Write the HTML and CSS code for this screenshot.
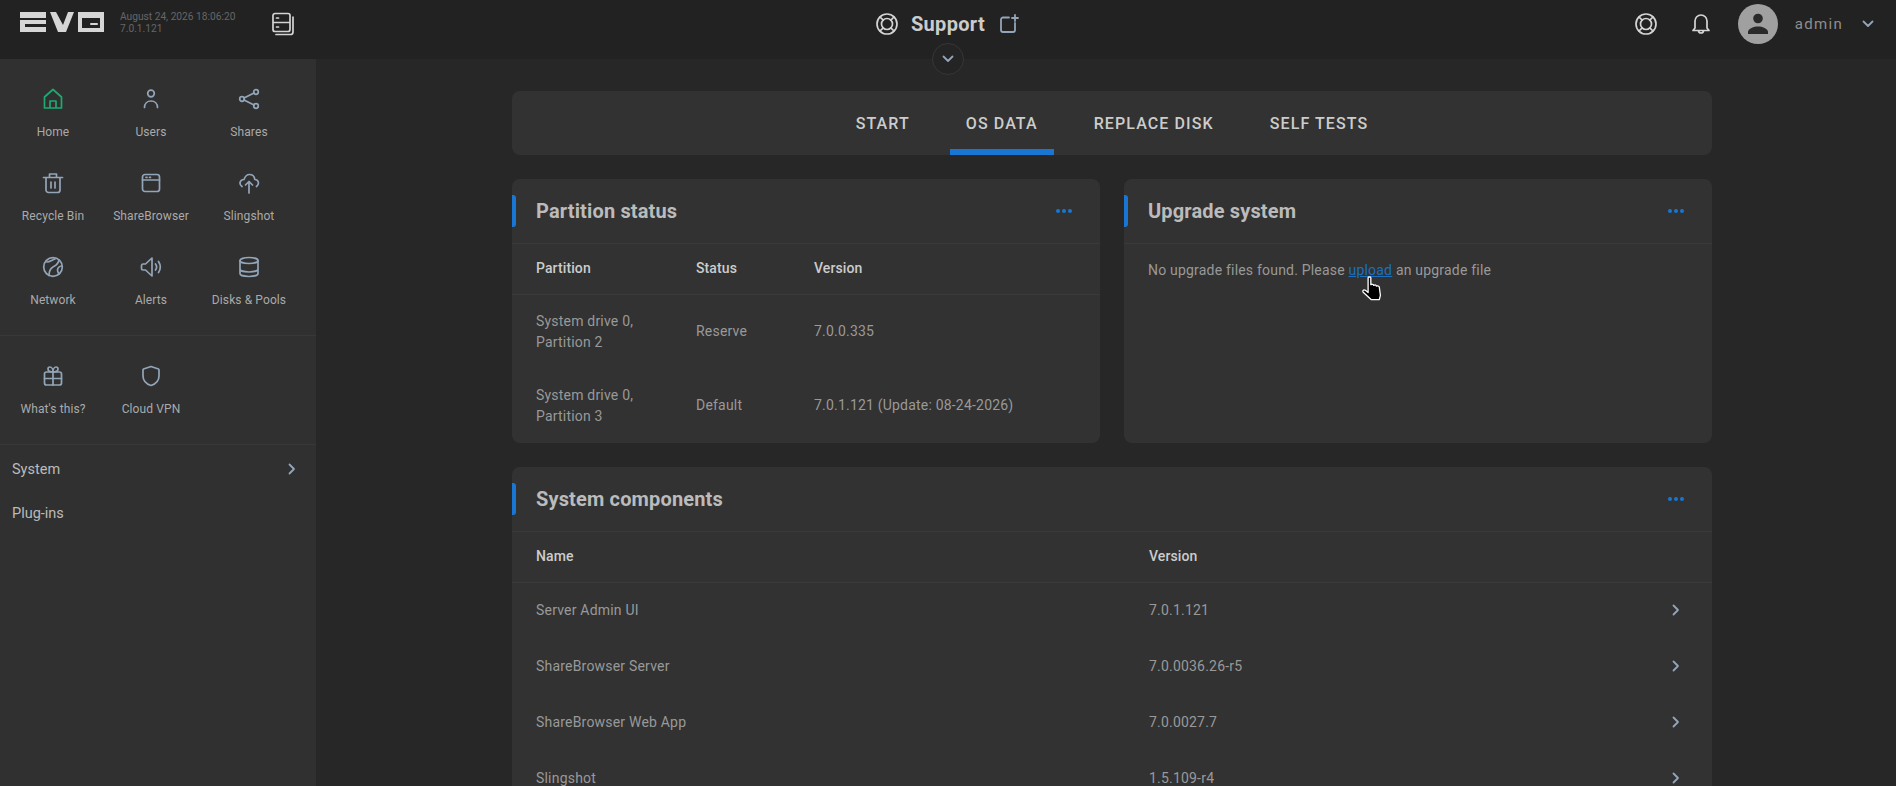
FILE: index.html
```html
<!DOCTYPE html>
<html lang="en">

<head>
    <meta charset="UTF-8">
    <title>Support</title>
    <link rel="stylesheet" href="styles.css">
</head>

<body>
    <header class="topbar">
        <div class="top-left">
            <svg class="logo" width="84" height="20" viewBox="0 0 84 20">
                <path fill="#d6d6d6" d="M0 0h26v6H0zM0 8h26v4H5v3h21v5H0z" />
                <path fill="#d6d6d6" d="M30 0h6l7 13 5-13h6l-8 20h-8z" />
                <path fill="#d6d6d6" fill-rule="evenodd" d="M58 0h26v20H58zM62 6v10h18V6z" />
                <rect fill="#d6d6d6" x="70" y="11" width="8" height="2" rx="1" />
            </svg>
            <div class="stamp">
                <div>August 24, 2026 18:06:20</div>
                <div>7.0.1.121</div>
            </div>
            <svg class="ico-light server" width="24" height="24" viewBox="0 0 24 24">
                <path d="M2 3.500a2 2 0 0 1 2-2h13a2 2 0 0 1 2 2v14a2 2 0 0 1-2 2H4a2 2 0 0 1-2-2zM2 10.500h17" />
                <path d="M22 5v15a2.500 2.500 0 0 1-2.500 2.500H5" />
                <path d="M5.500 6h2M5.500 15h2" />
            </svg>
        </div>
        <div class="top-mid">
            <svg class="ico-light" width="24" height="24" viewBox="0 0 24 24">
                <circle cx="12" cy="12" r="10" />
                <circle cx="12" cy="12" r="5.500" />
                <path d="M5 5l3.200 3.200M19 5l-3.200 3.200M5 19l3.200-3.200M19 19l-3.200-3.200" />
            </svg>
            <span class="page-name">Support</span>
            <svg class="ico-blue add-tab" width="20" height="20" viewBox="0 0 20 20">
                <path d="M10 3.500H4a2 2 0 0 0-2 2V16a2 2 0 0 0 2 2h10a2 2 0 0 0 2-2V9" />
                <path d="M16 1v6M13 4h6" />
            </svg>
        </div>
        <div class="top-right">
            <svg class="ico-light" width="24" height="24" viewBox="0 0 24 24">
                <circle cx="12" cy="12" r="10" />
                <circle cx="12" cy="12" r="5.500" />
                <path d="M5 5l3.200 3.200M19 5l-3.200 3.200M5 19l3.200-3.200M19 19l-3.200-3.200" />
            </svg>
            <svg class="ico-light bell" width="22" height="24" viewBox="0 0 22 24">
                <path d="M5 16V9a6 6 0 0 1 12 0v7l2 2.500H3zM8.500 18.500a2.500 2.500 0 0 0 5 0" />
            </svg>
            <div class="avatar">
                <svg width="40" height="40" viewBox="0 0 40 40">
                    <circle cx="20" cy="14.500" r="4.800" fill="#2a2a2a" />
                    <path fill="#2a2a2a" d="M10 30v-2c0-3.500 6-5.500 10-5.500s10 2 10 5.500v2z" />
                </svg>
            </div>
            <span class="user">admin</span>
            <svg class="ico-blue user-caret" width="12" height="8" viewBox="0 0 12 8">
                <path d="M1.500 1.500L6 6l4.500-4.500" />
            </svg>
        </div>
        <button class="collapse">
            <svg class="ico-blue" width="12" height="8" viewBox="0 0 12 8">
                <path d="M1.500 1.500L6 6l4.500-4.500" />
            </svg>
        </button>
    </header>

    <div class="page">
        <nav class="sidebar">
            <div class="nav-grid">
                <a class="nav-item active">
                    <svg width="24" height="24" viewBox="0 0 24 24">
                        <path d="M3.500 21V10L12 2.500 20.500 10v11zM9 21v-7h6v7" />
                    </svg>
                    <span>Home</span>
                </a>
                <a class="nav-item">
                    <svg width="24" height="24" viewBox="0 0 24 24">
                        <circle cx="12" cy="6.500" r="3.300" />
                        <path d="M5.500 20.500c0-4 2.800-6.500 6.500-6.500s6.500 2.500 6.500 6.500" />
                    </svg>
                    <span>Users</span>
                </a>
                <a class="nav-item">
                    <svg width="24" height="24" viewBox="0 0 24 24">
                        <circle cx="5" cy="12" r="2.300" />
                        <circle cx="19" cy="5" r="2.300" />
                        <circle cx="19" cy="19" r="2.300" />
                        <path d="M7 11l10-5M7 13l10 5" />
                    </svg>
                    <span>Shares</span>
                </a>
                <a class="nav-item">
                    <svg width="24" height="24" viewBox="0 0 24 24">
                        <path d="M2.500 6.500h19M8.500 6.500V3h7v3.500M5 6.500V19a2.500 2.500 0 0 0 2.500 2.500h9A2.500 2.500 0 0 0 19 19V6.500M10 11v6M14 11v6" />
                    </svg>
                    <span>Recycle Bin</span>
                </a>
                <a class="nav-item">
                    <svg width="24" height="24" viewBox="0 0 24 24">
                        <rect x="3.500" y="3.500" width="17" height="17" rx="2.500" />
                        <path d="M3.500 9h17M7 6.300h1M10.500 6.300h1" />
                    </svg>
                    <span>ShareBrowser</span>
                </a>
                <a class="nav-item">
                    <svg width="24" height="24" viewBox="0 0 24 24">
                        <path d="M5 15.500C1.500 13 3 8.500 7 8.500 8 5.500 10 3.500 12.500 3.500c3 0 5 2 5.300 5 3.700 0 5 4.500 1.700 7" />
                        <path d="M12 22v-11M8.500 14l3.500-3.500 3.500 3.500" />
                    </svg>
                    <span>Slingshot</span>
                </a>
                <a class="nav-item">
                    <svg width="24" height="24" viewBox="0 0 24 24">
                        <circle cx="12" cy="12" r="9.300" />
                        <path d="M18 5c-1 5-3.500 5.500-6 7s-4 3-4 8.500M14 4c-3 1-5.500 3-8 3" />
                        <path d="M20.500 11c-2 0-4 2-4 4s1 3 1.500 4" />
                    </svg>
                    <span>Network</span>
                </a>
                <a class="nav-item">
                    <svg width="24" height="24" viewBox="0 0 24 24">
                        <path d="M2.500 11v2.500c0 1 .7 1.500 1.500 1.500h2.500l6.500 6V3L6.500 9H4c-.8 0-1.500.6-1.500 2z" />
                        <path d="M16.500 9a5 5 0 0 1 0 6M19.500 6.500a10 10 0 0 1 0 11" />
                    </svg>
                    <span>Alerts</span>
                </a>
                <a class="nav-item">
                    <svg width="24" height="24" viewBox="0 0 24 24">
                        <ellipse cx="12" cy="5.500" rx="9" ry="3" />
                        <path d="M3 5.500v13c0 1.700 4 3 9 3s9-1.300 9-3v-13M3 14c0 1.700 4 3 9 3s9-1.300 9-3" />
                    </svg>
                    <span>Disks &amp; Pools</span>
                </a>
            </div>
            <div class="nav-grid second">
                <a class="nav-item">
                    <svg width="24" height="24" viewBox="0 0 24 24">
                        <rect x="3.500" y="8" width="17" height="13" rx="2" />
                        <path d="M3.500 14.500h17M12 8v13M12 8c-3 0-5-1-5-3a2 2 0 0 1 2-2c1.500 0 3 2 3 5zM12 8c3 0 5-1 5-3a2 2 0 0 0-2-2c-1.500 0-3 2-3 5z" />
                    </svg>
                    <span>What's this?</span>
                </a>
                <a class="nav-item">
                    <svg width="24" height="24" viewBox="0 0 24 24">
                        <path d="M12 2.500l7.500 2.500c.5 .2 .5 .5 .5 1v6c0 4.500-3.500 8-8 9.500C7.500 20 4 16.500 4 12V6c0-.5 0-.8 .5-1z" />
                    </svg>
                    <span>Cloud VPN</span>
                </a>
            </div>
            <div class="nav-list">
                <a class="nav-row">System
                    <svg class="ico-blue" width="8" height="12" viewBox="0 0 8 12">
                        <path d="M1.500 1.500L6 6l-4.500 4.500" />
                    </svg>
                </a>
                <a class="nav-row">Plug-ins</a>
            </div>
        </nav>

        <main class="content">
            <div class="wrap">
                <div class="tabs">
                    <a class="tab">START</a>
                    <a class="tab selected">OS DATA</a>
                    <a class="tab">REPLACE DISK</a>
                    <a class="tab">SELF TESTS</a>
                </div>

                <div class="two-col">
                    <section class="card">
                        <div class="card-head">
                            <h2>Partition status</h2>
                            <span class="dots"><i></i><i></i><i></i></span>
                        </div>
                        <table class="tbl partitions">
                            <thead>
                                <tr>
                                    <th>Partition</th>
                                    <th>Status</th>
                                    <th>Version</th>
                                </tr>
                            </thead>
                            <tbody>
                                <tr>
                                    <td>System drive 0, Partition 2</td>
                                    <td>Reserve</td>
                                    <td>7.0.0.335</td>
                                </tr>
                                <tr>
                                    <td>System drive 0, Partition 3</td>
                                    <td>Default</td>
                                    <td>7.0.1.121 (Update: 08-24-2026)</td>
                                </tr>
                            </tbody>
                        </table>
                    </section>

                    <section class="card">
                        <div class="card-head">
                            <h2>Upgrade system</h2>
                            <span class="dots"><i></i><i></i><i></i></span>
                        </div>
                        <p class="note">No upgrade files found. Please <a class="link">upload</a> an upgrade file</p>
                    </section>
                </div>

                <section class="card">
                    <div class="card-head">
                        <h2>System components</h2>
                        <span class="dots"><i></i><i></i><i></i></span>
                    </div>
                    <table class="tbl components">
                        <thead>
                            <tr>
                                <th>Name</th>
                                <th>Version</th>
                                <th></th>
                            </tr>
                        </thead>
                        <tbody>
                            <tr>
                                <td>Server Admin UI</td>
                                <td>7.0.1.121</td>
                                <td class="arrow"><svg class="ico-blue" width="8" height="12" viewBox="0 0 8 12"><path d="M1.500 1.500L6 6l-4.500 4.500" /></svg></td>
                            </tr>
                            <tr>
                                <td>ShareBrowser Server</td>
                                <td>7.0.0036.26-r5</td>
                                <td class="arrow"><svg class="ico-blue" width="8" height="12" viewBox="0 0 8 12"><path d="M1.500 1.500L6 6l-4.500 4.500" /></svg></td>
                            </tr>
                            <tr>
                                <td>ShareBrowser Web App</td>
                                <td>7.0.0027.7</td>
                                <td class="arrow"><svg class="ico-blue" width="8" height="12" viewBox="0 0 8 12"><path d="M1.500 1.500L6 6l-4.500 4.500" /></svg></td>
                            </tr>
                            <tr>
                                <td>Slingshot</td>
                                <td>1.5.109-r4</td>
                                <td class="arrow"><svg class="ico-blue" width="8" height="12" viewBox="0 0 8 12"><path d="M1.500 1.500L6 6l-4.500 4.500" /></svg></td>
                            </tr>
                        </tbody>
                    </table>
                </section>
            </div>
        </main>
    </div>

    <!-- mouse pointer caught in the screenshot -->
    <svg class="pointer" width="26" height="25" viewBox="0 0 22 23">
        <path fill="#000" stroke="#fff" stroke-width="1.200" stroke-linejoin="round" d="M6.500 1.500c0-1 2.500-1 2.500 0V8l1-.3c1-.2 1.500 .2 1.500 .8l1-.2c1-.2 1.500 .3 1.500 .9l1-.1c1-.1 1.800 .4 1.800 1.200l1 7.500-1 4H9.500L2 15c-1-1.500 .5-2.800 2-1.800l2.500 2z" />
    </svg>
</body>

</html>
```

FILE: styles.css
```css
* {
    box-sizing: border-box;
}

html,
body {
    margin: 0;
    height: 100%;
    overflow: hidden;
}

body {
    background: #272727;
    color: #999;
    font-family: Roboto, "Liberation Sans", sans-serif;
    font-size: 14px;
}

svg {
    display: block;
    fill: none;
    stroke-linecap: round;
    stroke-linejoin: round;
}

.ico-light {
    stroke: #d4d4d4;
    stroke-width: 1.7;
}

.ico-blue {
    stroke: #93a5b8;
    stroke-width: 1.8;
}

/* top bar */
.topbar {
    position: relative;
    height: 59px;
    background: #222;
    display: grid;
    grid-template-columns: 1fr auto 1fr;
    align-items: start;
}

.top-left {
    display: flex;
    padding: 12px 0 0 20px;
}

.stamp {
    margin: -1px 0 0 16px;
    font-size: 10.200px;
    line-height: 12px;
    color: #666;
    width: 151px;
}

.top-mid {
    display: flex;
    align-items: center;
    padding: 12px 2px 0 0;
}

.page-name {
    margin-left: 12px;
    font-size: 20px;
    font-weight: 700;
    letter-spacing: .3px;
    line-height: 24px;
    color: #ccc;
}

.add-tab {
    margin-left: 14px;
}

.top-right {
    display: flex;
    align-items: center;
    justify-content: flex-end;
    padding: 4px 22px 0 0;
}

.bell {
    margin-left: 32px;
}

.avatar {
    width: 40px;
    height: 40px;
    border-radius: 50%;
    background: #a0a0a0;
    margin-left: 26px;
}

.user {
    margin-left: 17px;
    font-size: 15px;
    letter-spacing: 1.300px;
    color: #8e8e8e;
}

.user-caret {
    margin-left: 19px;
}

.collapse {
    position: absolute;
    left: 932px;
    top: 43px;
    width: 32px;
    height: 32px;
    border: 1px solid #363636;
    border-radius: 50%;
    background: #242424;
    display: flex;
    align-items: center;
    justify-content: center;
    padding: 0;
    z-index: 2;
}

/* layout */
.page {
    display: flex;
    height: 727px;
}

.sidebar {
    width: 316px;
    flex: none;
    background: #303030;
}

.nav-grid {
    display: grid;
    grid-template-columns: repeat(3, 98px);
    padding: 16px 0 16px 4px;
    height: 277px;
    border-bottom: 1px solid #383838;
    grid-auto-rows: 84px;
}

.nav-grid.second {
    height: 109px;
    padding-top: 0;
    grid-auto-rows: 109px;
}

.nav-item {
    display: flex;
    flex-direction: column;
    align-items: center;
    padding-top: 12px;
    font-size: 12px;
    letter-spacing: .1px;
    line-height: 16px;
    color: #aaa;
    white-space: nowrap;
}

.nav-item span {
    margin-top: 13px;
}

.nav-grid.second .nav-item {
    padding-top: 28px;
}

.nav-item svg {
    stroke: #93a5b8;
    stroke-width: 1.7;
}

.nav-item.active svg {
    stroke: #1fa971;
}

.nav-list {
    padding-top: 2px;
}

.nav-row {
    height: 44px;
    padding: 0 20px 0 12px;
    display: flex;
    align-items: center;
    justify-content: space-between;
    font-size: 14.500px;
    color: #bbb;
}

.content {
    flex: 1;
    padding: 32px 0 0 12px;
}

.wrap {
    width: 1200px;
    margin: 0 auto;
}

/* tabs */
.tabs {
    height: 64px;
    background: #323232;
    border-radius: 8px;
    display: flex;
    justify-content: center;
    gap: 24px;
    margin-bottom: 24px;
}

.tab {
    padding: 23px 16px 0;
    height: 64px;
    font-size: 16px;
    font-weight: 500;
    line-height: 19px;
    letter-spacing: 1.100px;
    color: #ccc;
}

.tab.selected {
    border-bottom: 6px solid #1976d2;
}

/* cards */
.two-col {
    display: grid;
    grid-template-columns: 588px 588px;
    gap: 24px;
    margin-bottom: 24px;
}

.card {
    position: relative;
    background: #323232;
    border-radius: 8px;
}

.card:before {
    content: '';
    position: absolute;
    left: 0;
    top: 16px;
    width: 4px;
    height: 32px;
    background: #1976d2;
    border-radius: 0 3px 3px 0;
}

.card-head {
    height: 65px;
    padding: 0 24px;
    display: flex;
    align-items: center;
    justify-content: space-between;
    border-bottom: 1px solid #3a3a3a;
}

.card-head h2 {
    margin: 0;
    font-size: 20px;
    font-weight: 700;
    letter-spacing: .15px;
    color: #bbb;
}

.dots {
    display: flex;
    gap: 2px;
    margin-right: 4px;
}

.dots i {
    width: 4px;
    height: 4px;
    border-radius: 50%;
    background: #1976d2;
}

.tbl {
    width: 100%;
    border-collapse: collapse;
    table-layout: fixed;
}

.tbl th {
    height: 50px;
    padding: 0 0 2px 24px;
    text-align: left;
    font-weight: 500;
    letter-spacing: .1px;
    color: #ccc;
    border-bottom: 1px solid #3a3a3a;
}

.tbl td {
    padding: 0 0 0 24px;
    line-height: 21px;
    letter-spacing: .2px;
}

.partitions th:nth-child(1) {
    width: 160px;
}

.partitions th:nth-child(2) {
    width: 118px;
}

.partitions td:nth-child(1) {
    padding-right: 24px;
}

.partitions td {
    height: 74.500px;
}

.components th:nth-child(1) {
    width: 613px;
}

.components th:nth-child(3) {
    width: 64px;
}

.components td {
    height: 56px;
}

.note {
    margin: 0;
    padding: 16px 24px 0;
    line-height: 21px;
    letter-spacing: .2px;
    height: 153px;
}

.link {
    color: #1e6fbe;
    text-decoration: underline;
}

.pointer {
    position: absolute;
    left: 1360px;
    top: 276px;
}
```
